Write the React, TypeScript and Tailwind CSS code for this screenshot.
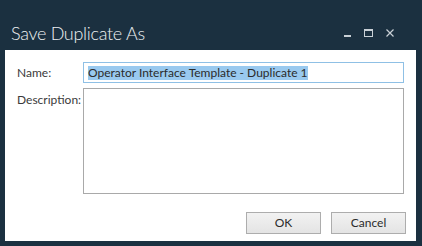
import React from "react";

export default function App() {
  const font = { fontFamily: "Lato, 'Open Sans', sans-serif" };
  return (
    <div className="w-[422px] h-[246px] bg-[#1b3040] flex flex-col pl-[5px] pr-[6px] pb-[5px]" style={font}>
      <div className="h-[50px] flex items-start">
        <div className="pl-[6px] pt-[21px] text-[18px] leading-[24px] tracking-[-0.3px] font-light text-[#eef1f3]">Save Duplicate As</div>
        <div className="ml-auto flex items-start pt-[29px] pr-[22px] gap-[13px]">
          <svg width="7" height="8" viewBox="0 0 7 8">
            <rect x="0" y="6" width="7" height="2" fill="#c9d0d6" />
          </svg>
          <svg width="9" height="8" viewBox="0 0 9 8">
            <rect x="0.5" y="0.5" width="8" height="7" fill="none" stroke="#c9d0d6" strokeWidth="1" />
            <rect x="0" y="0" width="9" height="2" fill="#c9d0d6" />
          </svg>
          <svg width="8" height="8" viewBox="0 0 8 8">
            <path d="M0.5 0.5 L7.5 7.5 M7.5 0.5 L0.5 7.5" stroke="#c9d0d6" strokeWidth="1.2" />
          </svg>
        </div>
      </div>
      <div className="flex-1 bg-white flex flex-col pt-[12px] pb-[7px]">
        <div className="flex pl-[12px] pr-[12px]">
          <div className="w-[66px] text-[12px] leading-[21px] text-[#3a3a3a]">Name:</div>
          <div className="flex-1 h-[21px] border border-[#8fc0e5] flex items-center pl-[4px]">
            <span className="bg-[#99c9ef] text-[#2b2b2b] text-[12px] leading-[14px] whitespace-nowrap">
              Operator Interface Template - Duplicate 1
            </span>
          </div>
        </div>
        <div className="flex pl-[12px] pr-[12px] mt-[5px]">
          <div className="w-[66px] text-[12px] leading-[16px] pt-[4px] text-[#3a3a3a]">Description:</div>
          <div className="flex-1 h-[106px] border border-[#a9a9a9]" />
        </div>
        <div className="flex justify-end gap-[10px] pr-[10px] mt-[18px]">
          <button className="w-[75px] h-[22px] border border-[#adadad] bg-gradient-to-b from-[#f2f2f2] to-[#e4e4e4] text-[12px] text-[#2b2b2b]">OK</button>
          <button className="w-[75px] h-[22px] border border-[#adadad] bg-gradient-to-b from-[#f2f2f2] to-[#e4e4e4] text-[12px] text-[#2b2b2b]">Cancel</button>
        </div>
      </div>
    </div>
  );
}
